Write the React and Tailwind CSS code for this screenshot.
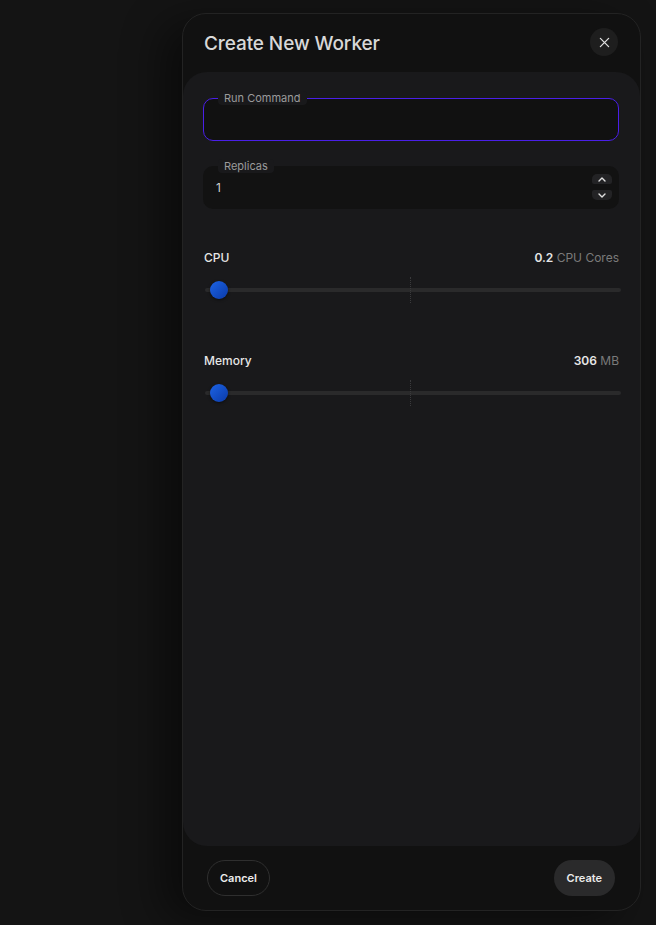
import React from "react";

function Slider({ pct }) {
  return (
    <div className="relative ml-[2px] -mr-[2px] h-[26px] flex items-center">
      <div className="h-[4px] w-full rounded-full bg-[#2a2a2b]" />
      <div className="absolute left-[205px] top-0 h-[26px] w-0 border-l border-dotted border-[#3a3a3c]" />
      <div
        className="absolute top-[4px] h-[18px] w-[18px] rounded-full bg-gradient-to-br from-[#1d64e6] to-[#0b3aa8] shadow-[0_1px_3px_rgba(0,0,0,0.5)]"
        style={{ left: `calc(${pct}% + 5px)` }}
      />
    </div>
  );
}

export default function App() {
  return (
    <div
      className="min-h-[925px] w-full bg-[#141414] pl-[182px] pr-[15px] pt-[13px] pb-[14px]"
      style={{ fontFamily: "Inter, 'Noto Sans', sans-serif" }}
    >
      <div className="flex h-[898px] flex-col rounded-[24px] border border-[#232323] bg-[#111111] shadow-[-20px_10px_40px_rgba(0,0,0,0.45)]">
        {/* Header */}
        <div className="flex h-[58px] items-center justify-between pl-[21px] pr-[22px]">
          <h2 className="text-[19px] font-medium tracking-[-0.1px] text-[#d8d8d8] pt-[2px]">
            Create New Worker
          </h2>
          <button className="flex h-[28px] w-[28px] items-center justify-center rounded-full bg-[#1e1e1e] -mt-[2px]">
            <svg width="11" height="11" viewBox="0 0 12 12" fill="none">
              <path d="M1.5 1.5l9 9M10.5 1.5l-9 9" stroke="#e0e0e0" strokeWidth="1.4" strokeLinecap="round" />
            </svg>
          </button>
        </div>

        {/* Panel */}
        <div className="flex-1 rounded-[24px] bg-[#19191b] pl-[20px] pr-[21px] pt-[26px]">
          {/* Run Command */}
          <div className="relative h-[43px] rounded-[10px] border border-[#4a1fe8] bg-[#111111]">
            <span className="absolute -top-[8px] left-[14px] h-[14px] rounded-[4px] bg-[#19191b] px-[6px] text-[11px] leading-[14px] text-[#9b9b9b]">
              Run Command
            </span>
          </div>

          {/* Replicas */}
          <div className="relative mt-[25px] flex h-[43px] items-center rounded-[10px] bg-[#121212] pl-[13px]">
            <span className="absolute -top-[7px] left-[15px] h-[14px] rounded-[4px] bg-[#19191b] px-[6px] text-[11px] leading-[14px] text-[#9b9b9b]">
              Replicas
            </span>
            <span className="text-[12px] text-[#d0d0d0] mt-[1px]">1</span>
            <div className="absolute right-[7px] top-[8px] flex flex-col gap-[6px]">
              <div className="flex h-[10px] w-[20px] items-center justify-center rounded-t-[5px] rounded-b-[2px] bg-[#232325]">
                <svg width="8" height="5" viewBox="0 0 8 5" fill="none">
                  <path d="M1 4l3-3 3 3" stroke="#e0e0e0" strokeWidth="1.4" strokeLinecap="round" strokeLinejoin="round" />
                </svg>
              </div>
              <div className="flex h-[10px] w-[20px] items-center justify-center rounded-b-[5px] rounded-t-[2px] bg-[#232325]">
                <svg width="8" height="5" viewBox="0 0 8 5" fill="none">
                  <path d="M1 1l3 3 3-3" stroke="#e0e0e0" strokeWidth="1.4" strokeLinecap="round" strokeLinejoin="round" />
                </svg>
              </div>
            </div>
          </div>

          {/* CPU */}
          <div className="mt-[40px] flex items-center justify-between pl-[1px]">
            <span className="text-[12px] font-medium text-[#e6e6e6]">CPU</span>
            <span className="text-[12px]">
              <span className="font-semibold text-[#e6e6e6]">0.2</span>{" "}
              <span className="text-[#7a7a7a]">CPU Cores</span>
            </span>
          </div>
          <div className="mt-[10px]">
            <Slider pct={0} />
          </div>

          {/* Memory */}
          <div className="mt-[49px] flex items-center justify-between pl-[1px]">
            <span className="text-[12px] font-medium text-[#e6e6e6]">Memory</span>
            <span className="text-[12px]">
              <span className="font-semibold text-[#e6e6e6]">306</span>{" "}
              <span className="text-[#7a7a7a]">MB</span>
            </span>
          </div>
          <div className="mt-[10px]">
            <Slider pct={0} />
          </div>
        </div>

        {/* Footer */}
        <div className="flex h-[64px] items-center justify-between pl-[24px] pr-[25px]">
          <button className="h-[36px] rounded-full border border-[#2f2f2f] px-[12px] text-[11px] font-semibold text-[#ececec]">
            Cancel
          </button>
          <button className="h-[36px] rounded-full bg-[#2a2a2b] px-[13px] text-[11px] font-semibold text-[#ececec]">
            Create
          </button>
        </div>
      </div>
    </div>
  );
}
